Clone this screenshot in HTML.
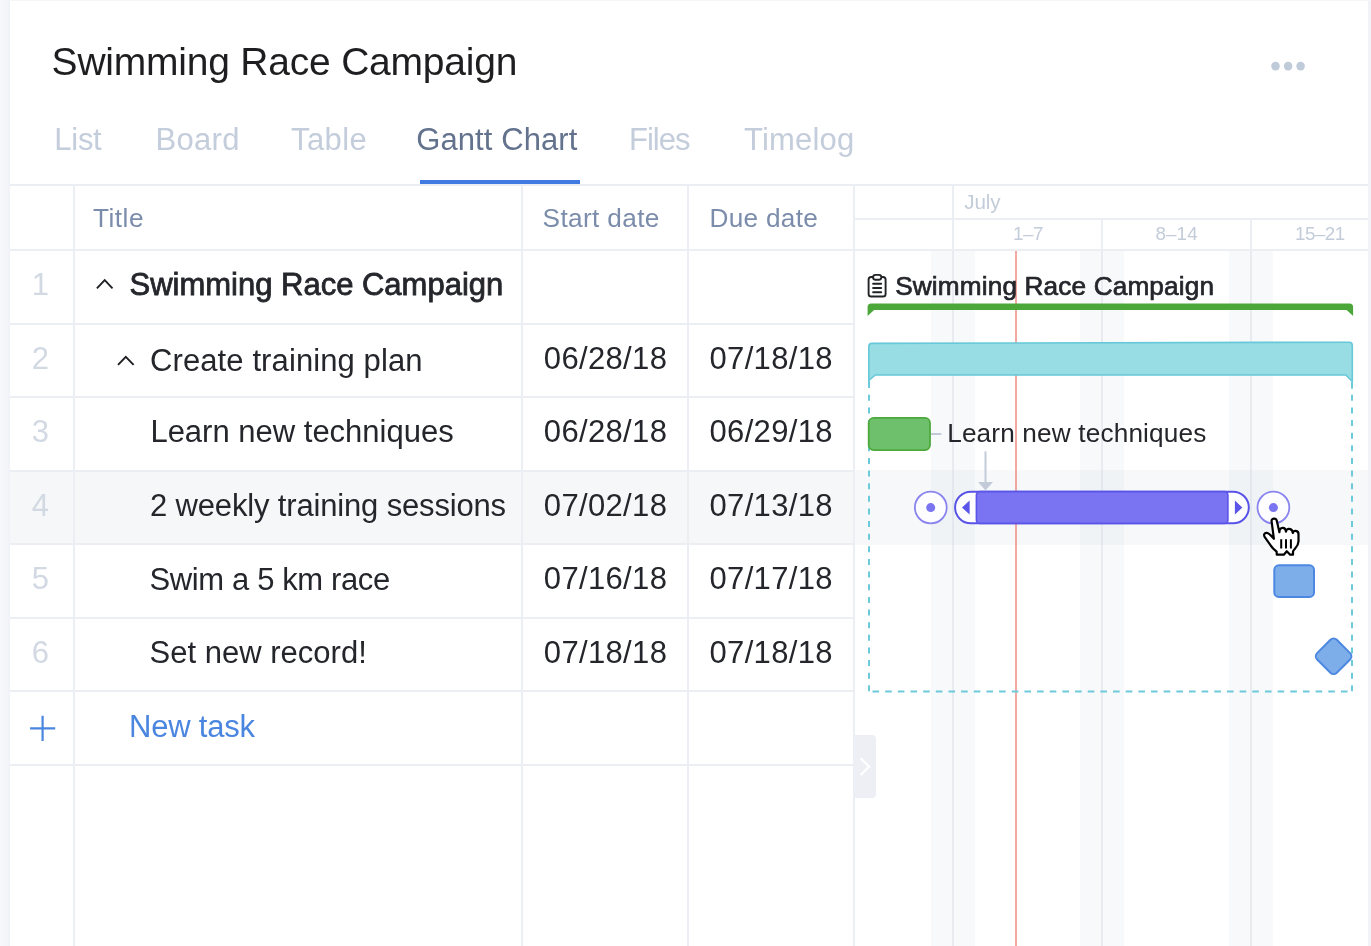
<!DOCTYPE html>
<html lang="en">
<head>
<meta charset="utf-8">
<title>Swimming Race Campaign – Gantt Chart</title>
<style>
*{box-sizing:border-box;margin:0;padding:0}
html,body{width:1371px;height:946px;overflow:hidden;background:#fff}
body{position:relative;font-family:"Liberation Sans",sans-serif}
.abs,.t,.h,.v,.bg{position:absolute}
.t{white-space:pre;line-height:1}
.h{height:2px;background:#ebeef3}
.v{width:2px;background:#ebeef3}
.wk{position:absolute;top:251px;bottom:0;width:44px;background:#f8f9fb}
.wl{position:absolute;top:251px;bottom:0;width:2px;background:rgba(200,208,222,.32)}
</style>
</head>
<body>
<!-- page frame -->
<div class="bg" style="left:0;top:0;width:10px;height:946px;background:linear-gradient(90deg,#f6f8fb 0,#f3f5f9 70%,#eef1f6 100%)"></div>
<div class="bg" style="left:1368px;top:0;width:3px;height:946px;background:#f1f3f8"></div>
<div class="bg" style="left:0;top:0;width:1371px;height:1px;background:#f3f5f9"></div>

<!-- more menu -->
<svg class="abs" style="left:1265px;top:56px" width="48" height="20" viewBox="0 0 48 20"><circle cx="10.5" cy="10.1" r="4.3" fill="#c0cbda"/><circle cx="23.1" cy="10.1" r="4.3" fill="#c0cbda"/><circle cx="35.6" cy="10.1" r="4.3" fill="#c0cbda"/></svg>

<!-- highlighted row 4 -->
<div class="bg" style="left:10px;top:472px;width:843px;height:71px;background:#f6f7f9"></div>
<div class="bg" style="left:855px;top:470px;width:513px;height:75px;background:#f7f8fa"></div>

<!-- gantt weekends + week lines -->
<div class="wk" style="left:931px"></div><div class="wk" style="left:1080px"></div><div class="wk" style="left:1229px"></div>
<div class="bg" style="left:931px;top:470px;width:44px;height:75px;background:#f0f3f6"></div>
<div class="bg" style="left:1080px;top:470px;width:44px;height:75px;background:#f0f3f6"></div>
<div class="bg" style="left:1229px;top:470px;width:44px;height:75px;background:#f0f3f6"></div>
<div class="wl" style="left:952px"></div><div class="wl" style="left:1101px"></div><div class="wl" style="left:1250px"></div>

<!-- grid lines -->
<div class="h" style="left:10px;top:184px;width:1358px"></div>
<div class="h" style="left:10px;top:249px;width:1358px"></div>
<div class="h" style="left:855px;top:218px;width:513px"></div>
<div class="h" style="left:10px;top:323px;width:843px"></div>
<div class="h" style="left:10px;top:396px;width:843px"></div>
<div class="h" style="left:10px;top:470px;width:843px"></div>
<div class="h" style="left:10px;top:543px;width:843px"></div>
<div class="h" style="left:10px;top:617px;width:843px"></div>
<div class="h" style="left:10px;top:690px;width:843px"></div>
<div class="h" style="left:10px;top:764px;width:843px"></div>
<div class="v" style="left:73px;top:186px;height:760px"></div>
<div class="v" style="left:521px;top:186px;height:760px"></div>
<div class="v" style="left:687px;top:186px;height:760px"></div>
<div class="v" style="left:853px;top:186px;height:760px"></div>
<div class="v" style="left:952px;top:186px;height:65px"></div>
<div class="v" style="left:1101px;top:220px;height:31px"></div>
<div class="v" style="left:1250px;top:220px;height:31px"></div>

<!-- active tab underline -->
<div class="bg" style="left:420px;top:180px;width:160px;height:4px;background:#3f7be0"></div>

<!-- today line -->
<div class="bg" style="left:1015px;top:251px;width:2px;height:695px;background:rgba(236,140,130,.75)"></div>

<svg class="abs" style="left:855px;top:251px" width="513" height="695" viewBox="855 251 513 695">
  <!-- project summary bracket -->
  <path d="M867.6 316 V307.2 Q867.6 303.6 871.2 303.6 H1349.5 Q1353.1 303.6 1353.1 307.2 V316 L1346.6 310 H874.1 Z" fill="#4ca73b"/>
  <!-- group bar (Create training plan) -->
  <path d="M868.8 380.5 V346.6 Q868.8 343.4 872 343.4 L1349.2 342.2 Q1352.3 342.2 1352.3 345.4 V381.5 L1345.8 375 H875.3 Z" fill="#98dde4" stroke="#66c8d8" stroke-width="1.6" stroke-linejoin="round"/>
  <!-- dashed group outline -->
  <path d="M869 394.8 V692" fill="none" stroke="#6ccadb" stroke-width="2" stroke-dasharray="6 6.63"/>
  <path d="M1352 394.8 V692" fill="none" stroke="#6ccadb" stroke-width="2" stroke-dasharray="6 6.63"/>
  <path d="M872.5 691.5 H1348" fill="none" stroke="#6ccadb" stroke-width="2" stroke-dasharray="6.6 6.06"/>
  <path d="M869 381 V388 M1352 382 V388.8" fill="none" stroke="#6ccadb" stroke-width="2"/>
  <!-- task 3 -->
  <rect x="868.7" y="417.9" width="61.3" height="32.2" rx="5" fill="#6fc06d" stroke="#4ea93c" stroke-width="1.8"/>
  <path d="M931 434 H941.3" stroke="#bcc5d4" stroke-width="1.8"/>
  <!-- dependency arrow -->
  <path d="M985.5 451.3 V483" stroke="#c3cbd8" stroke-width="2"/>
  <path d="M978 482 H993 L985.5 490.6 Z" fill="#c3cbd8"/>
  <!-- task 4 (selected) -->
  <circle cx="930.8" cy="507.5" r="15.9" fill="#fdfdff" stroke="#8a84ef" stroke-width="1.8"/>
  <circle cx="930.7" cy="507.6" r="4.5" fill="#7a74f0"/>
  <circle cx="1273.4" cy="507.5" r="15.9" fill="#fdfdff" stroke="#8a84ef" stroke-width="1.8"/>
  <circle cx="1273.4" cy="507.6" r="4.5" fill="#7a74f0"/>
  <rect x="955.1" y="491.7" width="293.7" height="31.6" rx="15.8" fill="#fdfdff" stroke="#5853e6" stroke-width="2"/>
  <rect x="976.4" y="491.6" width="251.5" height="31.8" rx="3.5" fill="#7a74f2" stroke="#5a55e8" stroke-width="1.6"/>
  <path d="M962 507.6 L969.6 500.6 V514.6 Z" fill="#5a55e8"/>
  <path d="M1242.3 507.6 L1234.9 500.6 V514.6 Z" fill="#5a55e8"/>
  <!-- task 5 -->
  <rect x="1274.3" y="565.3" width="39.7" height="31.6" rx="4.5" fill="#7eaeea" stroke="#4c88e2" stroke-width="2"/>
  <!-- milestone -->
  <rect x="1319.7" y="642.4" width="27.8" height="27.8" rx="4.5" transform="rotate(45 1333.6 656.3)" fill="#7eaeea" stroke="#4c88e2" stroke-width="2"/>
  <!-- clipboard icon -->
  <g fill="none" stroke="#222326" stroke-width="1.9" stroke-linecap="round" stroke-linejoin="round">
    <rect x="868.6" y="277" width="17" height="19.5" rx="2.6"/>
    <rect x="873.05" y="274.85" width="8.3" height="4.9" rx="2.45" fill="#fff"/>
    <path d="M873.1 283.7 H881.2 M873.1 287.95 H881.2 M873.1 292.2 H881.2"/>
  </g>
  <!-- hand cursor -->
  <g transform="translate(1263 517)" stroke="#000" stroke-linejoin="round" stroke-linecap="round">
    <path d="M8.6 4.4 C8 1.2 13 0.6 13.8 3.8 L16.4 15.2 C16.6 9.6 22.6 9.6 23 14.6 C23.4 10.6 29.4 10.8 29.8 16 C30.2 12.8 35.6 13 35.5 17.2 L35.5 24.5 C35.3 30 31 31.4 30 34.4 L30 37.7 H27.2 L23.8 34.2 L20.8 37.7 H13.8 L13.6 34.6 C11 32.5 9 30.6 7.8 28.6 L1.8 20.2 C0.2 17.6 1.6 15.6 3.8 15.9 C6.6 16.3 8.4 19.2 10.9 21.8 Z" fill="#fff" stroke-width="2.2"/>
    <path d="M18.2 22.2 V31.4 M23 22.2 V31.4 M27.9 22.2 V31.4" stroke-width="2" fill="none" stroke-linecap="butt"/>
  </g>
</svg>


<!-- collapse handle -->
<div class="bg" style="left:853px;top:735px;width:23px;height:63px;background:#edeff4;border-radius:0 4px 4px 0"></div>
<svg class="abs" style="left:853px;top:735px" width="23" height="63" viewBox="0 0 23 63"><path d="M7.6 23.3 L16.2 31.6 L7.6 40" fill="none" stroke="#fff" stroke-width="2.3" stroke-linecap="butt" stroke-linejoin="miter"/></svg>

<!-- row chevrons + add icon -->
<svg class="abs" style="left:90px;top:270px" width="60" height="110" viewBox="0 0 60 110"><path d="M6.9 18.3 L14.7 10.2 L22.5 18.3" fill="none" stroke="#1f2023" stroke-width="1.9"/><path d="M28 94.9 L35.8 86.8 L43.6 94.9" fill="none" stroke="#1f2023" stroke-width="1.9"/></svg>
<svg class="abs" style="left:28px;top:714px" width="30" height="30" viewBox="0 0 30 30"><path d="M2.1 14.4 H27.2 M14.6 1.7 V27" fill="none" stroke="#4a86e0" stroke-width="2.2"/></svg>

<div class="abs" style="left:0;top:0;width:1371px;height:946px;will-change:transform">
<div class="t" style="left:51.6px;top:41.6px;font-size:39px;color:#1e1e20;letter-spacing:-0.214px;">Swimming Race Campaign</div>
<div class="t" style="left:54.3px;top:123.8px;font-size:31px;color:#c4cddb;letter-spacing:-0.267px;">List</div>
<div class="t" style="left:155.4px;top:123.8px;font-size:31px;color:#c4cddb;letter-spacing:0.325px;">Board</div>
<div class="t" style="left:291.1px;top:123.8px;font-size:31px;color:#c4cddb;letter-spacing:0.375px;">Table</div>
<div class="t" style="left:416.2px;top:123.8px;font-size:31px;color:#63728d;letter-spacing:0.090px;">Gantt Chart</div>
<div class="t" style="left:629.0px;top:123.8px;font-size:31px;color:#c4cddb;letter-spacing:-1.000px;">Files</div>
<div class="t" style="left:744.0px;top:123.8px;font-size:31px;color:#c4cddb;letter-spacing:0.200px;">Timelog</div>
<div class="t" style="left:93.0px;top:204.6px;font-size:26.2px;color:#7b8dab;letter-spacing:0.500px;">Title</div>
<div class="t" style="left:542.6px;top:204.6px;font-size:26.2px;color:#7b8dab;letter-spacing:0.356px;">Start date</div>
<div class="t" style="left:709.5px;top:204.6px;font-size:26.2px;color:#7b8dab;letter-spacing:0.286px;">Due date</div>
<div class="t" style="left:964.2px;top:192.2px;font-size:20.6px;color:#c3ccd9;letter-spacing:-0.067px;">July</div>
<div class="t" style="left:1013.0px;top:224.8px;font-size:18.8px;color:#c3ccd9;letter-spacing:-0.500px;">1–7</div>
<div class="t" style="left:1155.4px;top:224.8px;font-size:18.8px;color:#c3ccd9;letter-spacing:0.133px;">8–14</div>
<div class="t" style="left:1295.0px;top:224.8px;font-size:18.8px;color:#c3ccd9;letter-spacing:-0.500px;">15–21</div>
<div class="t" style="left:31.7px;top:268.8px;font-size:31px;color:#d2d9e3;">1</div>
<div class="t" style="left:31.7px;top:342.8px;font-size:31px;color:#d2d9e3;">2</div>
<div class="t" style="left:31.7px;top:415.8px;font-size:31px;color:#d2d9e3;">3</div>
<div class="t" style="left:31.7px;top:489.8px;font-size:31px;color:#d2d9e3;">4</div>
<div class="t" style="left:31.7px;top:563.3px;font-size:31px;color:#d2d9e3;">5</div>
<div class="t" style="left:31.7px;top:636.8px;font-size:31px;color:#d2d9e3;">6</div>
<div class="t" style="left:129.5px;top:268.8px;font-size:31px;color:#24262b;letter-spacing:-0.005px;-webkit-text-stroke:0.8px #24262b;">Swimming Race Campaign</div>
<div class="t" style="left:150.0px;top:344.8px;font-size:31px;color:#24262b;letter-spacing:0.105px;">Create training plan</div>
<div class="t" style="left:150.4px;top:415.8px;font-size:31px;color:#24262b;">Learn new techniques</div>
<div class="t" style="left:150.0px;top:489.8px;font-size:31px;color:#24262b;letter-spacing:-0.160px;">2 weekly training sessions</div>
<div class="t" style="left:149.5px;top:563.8px;font-size:31px;color:#24262b;letter-spacing:-0.373px;">Swim a 5 km race</div>
<div class="t" style="left:149.5px;top:636.8px;font-size:31px;color:#24262b;letter-spacing:0.014px;">Set new record!</div>
<div class="t" style="left:129.0px;top:710.5px;font-size:31px;color:#4a86e0;letter-spacing:-0.214px;">New task</div>
<div class="t" style="left:543.8px;top:342.8px;font-size:31px;color:#24262b;letter-spacing:0.343px;">06/28/18</div>
<div class="t" style="left:709.5px;top:342.8px;font-size:31px;color:#24262b;letter-spacing:0.343px;">07/18/18</div>
<div class="t" style="left:543.8px;top:415.8px;font-size:31px;color:#24262b;letter-spacing:0.343px;">06/28/18</div>
<div class="t" style="left:709.5px;top:415.8px;font-size:31px;color:#24262b;letter-spacing:0.343px;">06/29/18</div>
<div class="t" style="left:543.8px;top:489.8px;font-size:31px;color:#24262b;letter-spacing:0.343px;">07/02/18</div>
<div class="t" style="left:709.5px;top:489.8px;font-size:31px;color:#24262b;letter-spacing:0.343px;">07/13/18</div>
<div class="t" style="left:543.8px;top:563.3px;font-size:31px;color:#24262b;letter-spacing:0.343px;">07/16/18</div>
<div class="t" style="left:709.5px;top:563.3px;font-size:31px;color:#24262b;letter-spacing:0.343px;">07/17/18</div>
<div class="t" style="left:543.8px;top:636.8px;font-size:31px;color:#24262b;letter-spacing:0.343px;">07/18/18</div>
<div class="t" style="left:709.5px;top:636.8px;font-size:31px;color:#24262b;letter-spacing:0.343px;">07/18/18</div>
<div class="t" style="left:895.2px;top:272.8px;font-size:26.2px;color:#24262b;letter-spacing:0.143px;-webkit-text-stroke:0.7px #24262b;">Swimming Race Campaign</div>
<div class="t" style="left:947.2px;top:419.5px;font-size:26.2px;color:#24262b;letter-spacing:0.153px;">Learn new techniques</div>
</div>
</body>
</html>
